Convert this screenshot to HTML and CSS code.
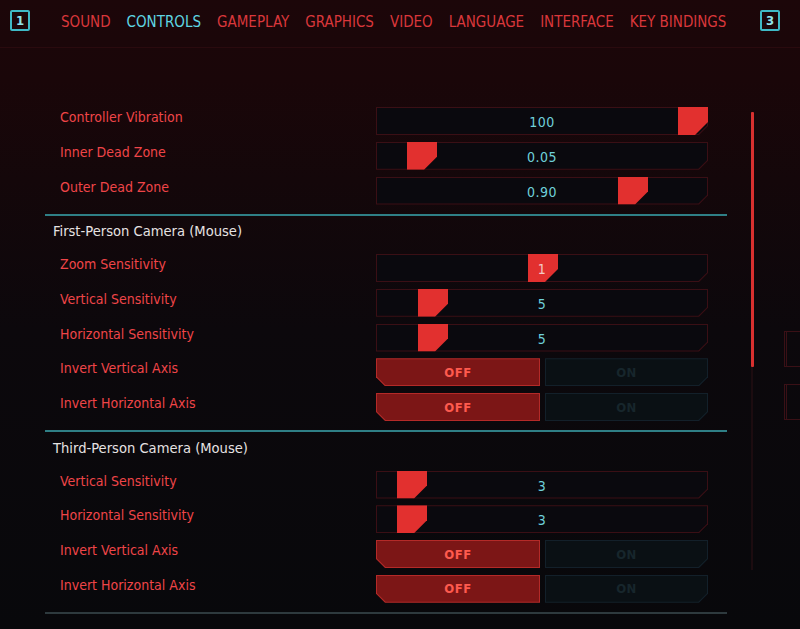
FILE: index.html
```html
<!DOCTYPE html>
<html>
<head>
<meta charset="utf-8">
<link rel="stylesheet" href="styles.css">
</head>
<body>
<div class="screen">
  <nav class="nav">
    <span class="key">1</span>
    <ul class="tabs">
      <li>SOUND</li>
      <li class="active">CONTROLS</li>
      <li>GAMEPLAY</li>
      <li>GRAPHICS</li>
      <li>VIDEO</li>
      <li>LANGUAGE</li>
      <li>INTERFACE</li>
      <li>KEY BINDINGS</li>
    </ul>
    <span class="key">3</span>
  </nav>

  <div class="body">
    <main class="list">
      <section class="group first">
        <div class="rows">
          <div class="row"><span class="label">Controller Vibration</span>
            <div class="slider"><span class="val">100</span><span class="thumb" style="left:302px"></span></div></div>
          <div class="row"><span class="label">Inner Dead Zone</span>
            <div class="slider"><span class="val">0.05</span><span class="thumb" style="left:31px"></span></div></div>
          <div class="row"><span class="label">Outer Dead Zone</span>
            <div class="slider"><span class="val">0.90</span><span class="thumb" style="left:242px"></span></div></div>
        </div>
      </section>

      <section class="group">
        <h2 class="head">First-Person Camera (Mouse)</h2>
        <div class="rows">
          <div class="row"><span class="label">Zoom Sensitivity</span>
            <div class="slider"><span class="thumb" style="left:152px"></span><span class="val on-thumb">1</span></div></div>
          <div class="row"><span class="label">Vertical Sensitivity</span>
            <div class="slider"><span class="val">5</span><span class="thumb" style="left:42px"></span></div></div>
          <div class="row"><span class="label">Horizontal Sensitivity</span>
            <div class="slider"><span class="val">5</span><span class="thumb" style="left:42px"></span></div></div>
          <div class="row"><span class="label">Invert Vertical Axis</span>
            <div class="toggle"><span class="opt off">OFF</span><span class="opt on">ON</span></div></div>
          <div class="row"><span class="label">Invert Horizontal Axis</span>
            <div class="toggle"><span class="opt off">OFF</span><span class="opt on">ON</span></div></div>
        </div>
      </section>

      <section class="group">
        <h2 class="head">Third-Person Camera (Mouse)</h2>
        <div class="rows">
          <div class="row"><span class="label">Vertical Sensitivity</span>
            <div class="slider"><span class="val">3</span><span class="thumb" style="left:21px"></span></div></div>
          <div class="row"><span class="label">Horizontal Sensitivity</span>
            <div class="slider"><span class="val">3</span><span class="thumb" style="left:21px"></span></div></div>
          <div class="row"><span class="label">Invert Vertical Axis</span>
            <div class="toggle"><span class="opt off">OFF</span><span class="opt on">ON</span></div></div>
          <div class="row"><span class="label">Invert Horizontal Axis</span>
            <div class="toggle"><span class="opt off">OFF</span><span class="opt on">ON</span></div></div>
        </div>
      </section>

      <section class="group last"></section>
    </main>

    <div class="scroll"><span class="bar"></span></div>
    <div class="edge">
      <span class="edge-box"></span>
      <span class="edge-box"></span>
    </div>
  </div>
</div>
</body>
</html>
```

FILE: styles.css
```css
* { box-sizing: border-box; margin: 0; padding: 0; }

html, body {
  width: 800px;
  height: 629px;
  overflow: hidden;
}

body {
  background: linear-gradient(180deg, #1c0609 0px, #1a0609 80px, #14070a 180px, #0c080c 330px, #08080b 629px);
  font-family: "DejaVu Sans Condensed", "Liberation Sans", sans-serif;
  font-stretch: condensed;
  color: #ef4548;
}

.screen {
  display: flex;
  flex-direction: column;
  height: 629px;
}

/* ---------- nav ---------- */
.nav {
  display: flex;
  align-items: flex-start;
  height: 48px;
  padding: 10px 20px 0 10px;
  border-bottom: 1px solid #2a0a0e;
}

.key {
  flex: 0 0 auto;
  width: 20px;
  height: 21px;
  border: 2px solid #3fb9c6;
  border-radius: 2px;
  color: #8fe3ea;
  font-size: 13px;
  line-height: 17px;
  text-align: center;
  font-weight: bold;
}

.tabs {
  list-style: none;
  display: flex;
  gap: 16px;
  margin: 2px auto 0 31px;
  font-size: 15px;
  line-height: 20px;
  white-space: nowrap;
  color: #d9373b;
}

.tabs .active { color: #5fd6e3; }

/* ---------- body ---------- */
.body {
  position: relative;
  flex: 1;
  display: flex;
}

.list {
  flex: 0 0 682px;
  width: 682px;
  margin-left: 45px;
  padding-top: 59px;
}

.group {
  border-top: 2px solid #2f7f86;
}

.group.first { border-top: none; }
.group.last { border-top-color: #2e3a3e; }

.head {
  height: 31px;
  margin-bottom: 7.5px;
  padding: 5.5px 0 0 8px;
  font-size: 14.6px;
  font-weight: normal;
  line-height: 20px;
  color: #e6e2e2;
}

.rows {
  display: flex;
  flex-direction: column;
  gap: 6.75px;
  margin-bottom: 9px;
}

.row {
  display: flex;
  align-items: flex-start;
  height: 28px;
}

.label {
  width: 331px;
  padding-left: 15px;
  font-size: 14px;
  line-height: 20px;
  color: #ef4548;
}

/* ---------- slider ---------- */
.slider {
  position: relative;
  width: 332px;
  height: 28px;
  background: #3a0f15;
  clip-path: polygon(0 0, 100% 0, 100% calc(100% - 9px), calc(100% - 9px) 100%, 0 100%);
}

.slider::before {
  content: "";
  position: absolute;
  inset: 1px;
  background: #0a090e;
  clip-path: polygon(0 0, 100% 0, 100% calc(100% - 8.6px), calc(100% - 8.6px) 100%, 0 100%);
}

.val {
  position: absolute;
  left: 0;
  right: 0;
  top: 5px;
  text-align: center;
  font-size: 14px;
  line-height: 20px;
  color: #6fd0da;
  z-index: 2;
  letter-spacing: 0.5px;
}

.val.on-thumb { color: #f4c9c6; }

.thumb {
  position: absolute;
  top: 0;
  width: 30px;
  height: 28px;
  background: #e2302f;
  clip-path: polygon(0 0, 100% 0, 100% calc(100% - 13px), calc(100% - 13px) 100%, 0 100%);
  z-index: 1;
}

/* ---------- toggle ---------- */
.toggle {
  display: flex;
  gap: 5px;
  width: 332px;
  height: 28px;
}

.opt {
  position: relative;
  z-index: 0;
  flex: 1;
  display: flex;
  align-items: center;
  justify-content: center;
  font-size: 13px;
  font-weight: bold;
  letter-spacing: 0.5px;
}

.opt.off {
  flex: 0 0 164px;
  color: #ff5a4e;
  background: #b42a28;
  clip-path: polygon(0 0, 100% 0, 100% 100%, 9px 100%, 0 calc(100% - 9px));
}

.opt.off::before {
  content: "";
  position: absolute;
  inset: 1px;
  background: #7c1616;
  clip-path: polygon(0 0, 100% 0, 100% 100%, 8.6px 100%, 0 calc(100% - 8.6px));
  z-index: -1;
}

.opt.on {
  color: #17262c;
  background: #13202a;
  clip-path: polygon(0 0, 100% 0, 100% calc(100% - 9px), calc(100% - 9px) 100%, 0 100%);
}

.opt.on::before {
  content: "";
  position: absolute;
  inset: 1px;
  background: #0a1014;
  clip-path: polygon(0 0, 100% 0, 100% calc(100% - 8.6px), calc(100% - 8.6px) 100%, 0 100%);
  z-index: -1;
}

/* ---------- scrollbar ---------- */
.scroll {
  flex: 0 0 2px;
  width: 2px;
  margin: 64px 0 0 24px;
  height: 458px;
  background: #1c0c10;
}

.bar {
  display: block;
  width: 3px;
  margin-left: -0.5px;
  height: 255px;
  background: #d8302f;
  border-radius: 1px;
}

/* ---------- right edge ---------- */
.edge {
  flex: 0 0 auto;
  display: flex;
  flex-direction: column;
  gap: 17px;
  margin: 283px 0 0 31px;
}

.edge-box {
  width: 20px;
  height: 36px;
  border: 1px solid #3a1016;
  border-right: none;
  border-left: 3px double #3a1016;
}
```
